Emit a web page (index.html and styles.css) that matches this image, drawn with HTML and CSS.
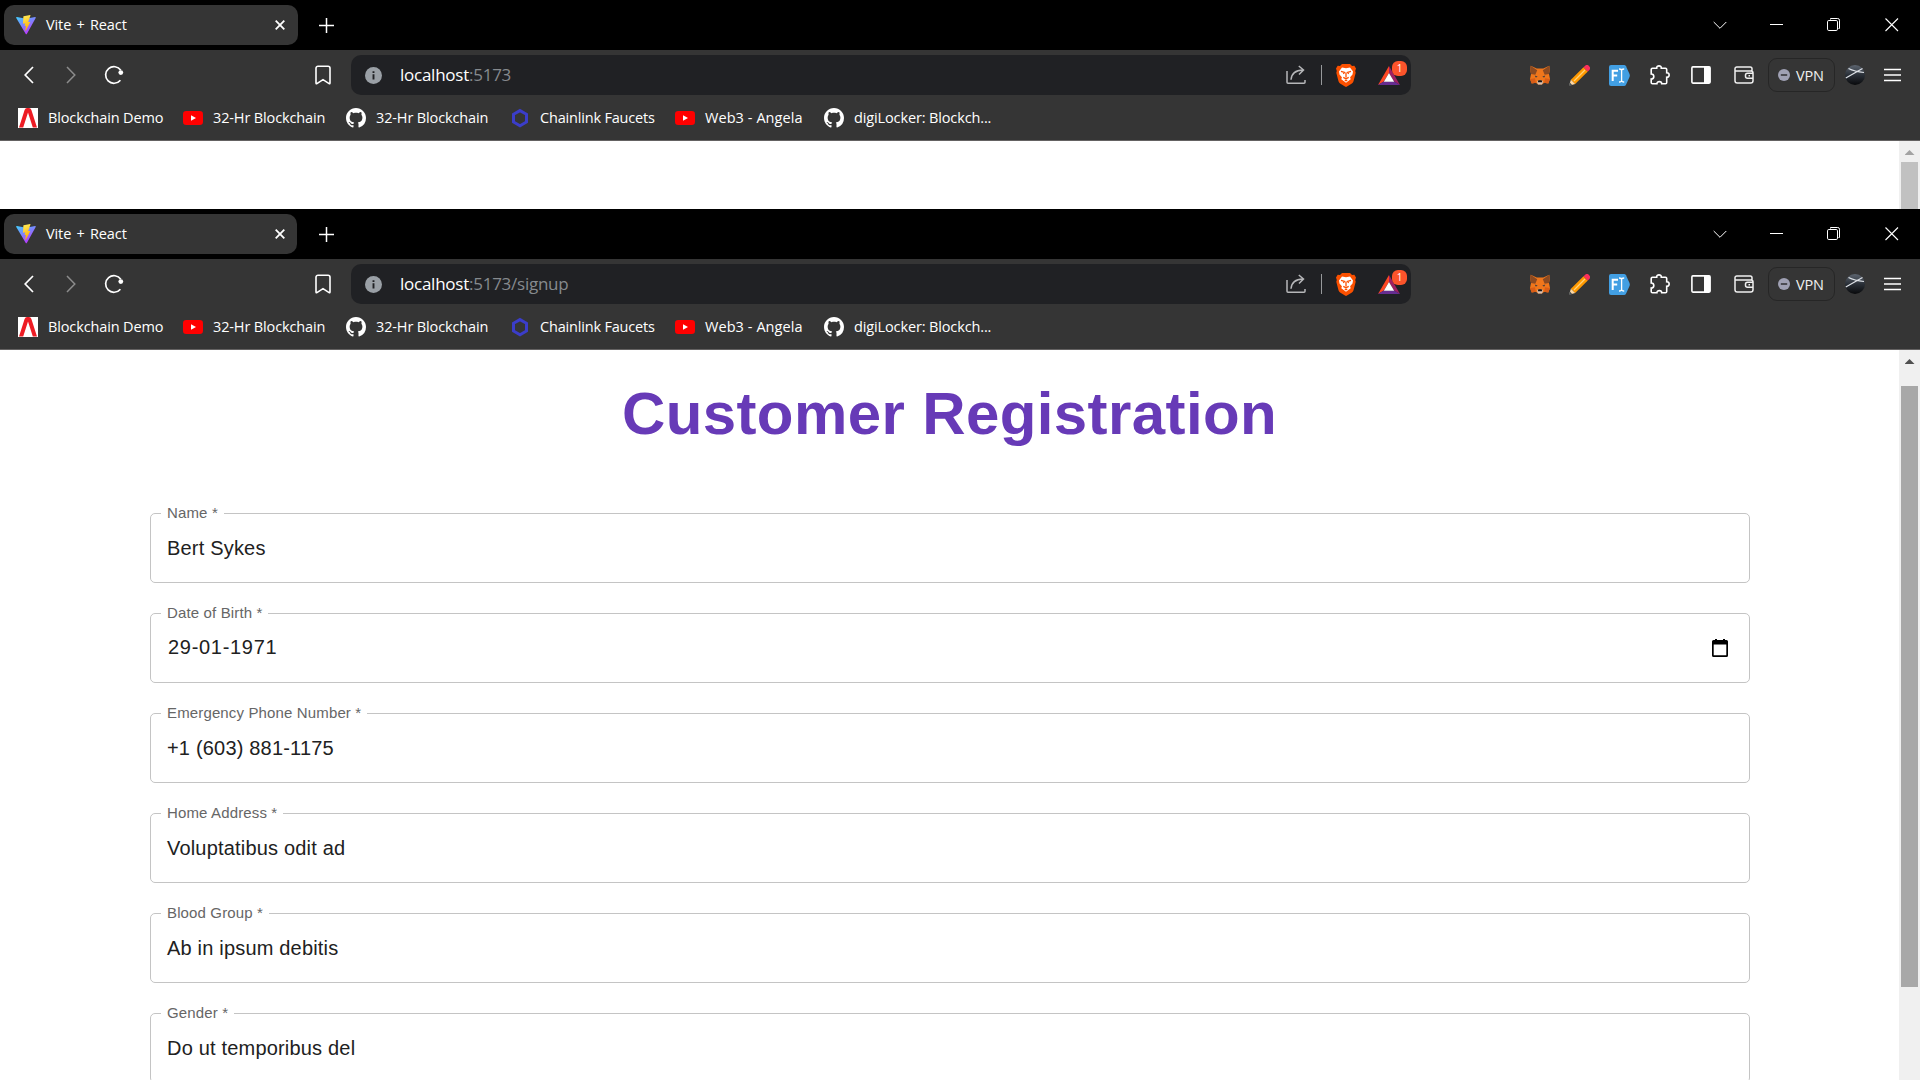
FILE: index.html
```html
<!DOCTYPE html>
<html lang="en">
<head>
<meta charset="utf-8">
<title>Vite + React</title>
<link rel="stylesheet" href="styles.css">
</head>
<body>
<svg class="sprite" aria-hidden="true">
  <defs>
    <linearGradient id="vg" x1="0" y1="0" x2="0.6" y2="1"><stop offset="0" stop-color="#41d1ff"/><stop offset="1" stop-color="#bd34fe"/></linearGradient>
    <linearGradient id="bolt" x1="0.4" y1="0" x2="0.6" y2="1"><stop offset="0" stop-color="#ffea55"/><stop offset="1" stop-color="#ffa800"/></linearGradient>
    <linearGradient id="ball" x1="0" y1="0" x2="0" y2="1"><stop offset="0" stop-color="#5d6570"/><stop offset="0.5" stop-color="#2a3038"/><stop offset="1" stop-color="#08090b"/></linearGradient>
  </defs>
  <symbol id="vite" viewBox="0 0 32 32"><path d="M31.5 4.8 17.3 30.3a1 1 0 0 1-1.7 0L.4 4.8a1 1 0 0 1 1-1.5l14.5 2.6 14.6-2.6a1 1 0 0 1 1 1.5Z" fill="url(#vg)"/><path d="M22.7.1 12.2 2.1a.4.4 0 0 0-.4.4l-.6 11a.4.4 0 0 0 .5.4l3-.7-.9 4.4 2.2-.2-1.3 7.5 1 .1L22.9 11l-3.4.3L23.200.6Z" fill="url(#bolt)"/></symbol>
  <symbol id="tabx" viewBox="0 0 10 10"><path d="M.7.7 9.300 9.300M9.300.7.7 9.300" stroke="#fff" stroke-width="1.8"/></symbol>
  <symbol id="plus" viewBox="0 0 15 15"><path d="M7.500 0v15M0 7.500h15" stroke="#fff" stroke-width="1.500"/></symbol>
  <symbol id="down" viewBox="0 0 14 14"><path d="m.7 4 6.300 6.300L13.300 4" fill="none" stroke="#fff" stroke-width="1"/></symbol>
  <symbol id="min" viewBox="0 0 14 14"><path d="M0 6.500h13" stroke="#fff"/></symbol>
  <symbol id="max" viewBox="0 0 14 14"><path d="M3.500 1.500V.5h7.200a1.800 1.800 0 0 1 1.800 1.800v8.200h-1" fill="none" stroke="#fff"/><rect x=".5" y="2.500" width="10" height="10" rx="1.300" fill="none" stroke="#fff"/></symbol>
  <symbol id="wx" viewBox="0 0 14 14"><path d="m.5.5 12.500 12.500M13 .5.5 13" stroke="#fff" stroke-width="1.100"/></symbol>
  <symbol id="back" viewBox="0 0 10 18"><path d="M9 1 1.200 9 9 17" fill="none" stroke="#fff" stroke-width="1.700"/></symbol>
  <symbol id="fwd" viewBox="0 0 10 18"><path d="m1 1 7.800 8L1 17" fill="none" stroke="#8c8c8c" stroke-width="1.500"/></symbol>
  <symbol id="reload" viewBox="0 0 20 20"><path d="M16.400 15.200a8.300 8.300 0 1 1 .4-9.900" fill="none" stroke="#fff" stroke-width="1.700"/><circle cx="16.800" cy="7.600" r="2.400" fill="#fff"/></symbol>
  <symbol id="mark" viewBox="0 0 16 20"><path d="M1 3.200A2 2 0 0 1 3 1.200h10a2 2 0 0 1 2 2v14.900q0 1-.9.5L8 14.600 1.900 18.600q-.9.500-.9-.5Z" fill="none" stroke="#fff" stroke-width="1.600"/></symbol>
  <symbol id="info" viewBox="0 0 17 17"><circle cx="8.500" cy="8.500" r="8.500" fill="#9aa0a6"/><path d="M8.500 7.200v5.300M8.500 4.200v1.900" stroke="#202124" stroke-width="1.900"/></symbol>
  <symbol id="share" viewBox="0 0 20 20"><path d="M1 6v11.200a1 1 0 0 0 1 1h16a1 1 0 0 0 1-1V15M5 14.800C5.500 8.500 9 5.300 17 5.100M12.800 1 17.500 5l-4.500 4.500" fill="none" stroke="#b6b7b9" stroke-width="1.500"/></symbol>
  <symbol id="brave" viewBox="0 0 20 23"><path d="M6 0h8l2 2 2.300-.2L20 4.600l-.8 2.300.5 1.800-2.200 8.600a4 4 0 0 1-1.600 2.200L11 22.600a2 2 0 0 1-2 0l-4.900-3.100a4 4 0 0 1-1.600-2.200L.3 8.700l.5-1.800L0 4.600l1.700-2.800L4 2Z" fill="#fb5000"/><path d="m6 3.500 4 .8 4-.8 3 3.900-.5 3-2.400 2.800.6 2.100L10 18.700l-4.700-3.400.6-2.100-2.400-2.800-.5-3Z" fill="#fff"/><path d="m5 7.400 3.400 1-1 1.600M15 7.400l-3.400 1 1 1.600M10 8.400v5M7.300 13.400 10 14.800l2.700-1.400M8.700 16.500h2.600" fill="none" stroke="#fb5000" stroke-width="1.300"/></symbol>
  <symbol id="bat" viewBox="0 0 22 19"><path d="M11 0v7L5.800 15.500 0 19Z" fill="#ff4724"/><path d="M11 0v7l5.200 8.500L22 19Z" fill="#9e1f63"/><path d="m0 19 5.800-3.500h10.400L22 19Z" fill="#662d91"/><path d="m11 7 5.200 8.700H5.800Z" fill="#fff"/></symbol>
  <symbol id="fox" viewBox="0 0 20 20"><path d="m.7.800 6 2.700h6.600l6-2.700.5 4.200-.8 4 1 5-1.700 4.500-4.200-.8L12 19.500H8l-2.100-1.800-4.200.8L0 14l1-5-.8-4Z" fill="#f0761b"/><path d="m.7.800 6.500 4.400-1.900 4.500L1 9l-.8-4ZM19.300.8l-6.500 4.400 1.900 4.500L19 9l.8-4Z" fill="#8b4a22"/><path d="m0 14 5-.8.900 4.500-4.200.8ZM20 14l-5-.8-.9 4.500 4.200.8Z" fill="#d95d17"/><path d="m4.800 10.600 2.900 1.200-1.900.6ZM15.200 10.600l-2.900 1.200 1.900.6Z" fill="#233447"/><path d="m7 16.700 1-1.200h4l1 1.200-1 2.800H8Z" fill="#d7c1b3"/><path d="M8.300 15.200h3.400l.5 2H7.800Z" fill="#161616"/></symbol>
  <symbol id="pencil" viewBox="0 0 21 21"><path d="m14.500 2.200 4.300 4.300L6.200 19 1.900 14.700Z" fill="#ff9900"/><path d="m1.900 14.700 4.300 4.300-5.400 1.600-.6-.7Z" fill="#ffd9a5"/><path d="m.9 17.600 2.300 2.300-2.400 1-.7-.9Z" fill="#46515b"/><path d="m14.500 2.200 1.700-1.500a2.500 2.500 0 0 1 3.500 0l.7.7a2.500 2.500 0 0 1 0 3.500l-1.600 1.600Z" fill="#f9305b"/><path d="M5 16 16 5" stroke="#ffd27a" stroke-width="1.200"/></symbol>
  <symbol id="fi" viewBox="0 0 21 21"><path d="M2 0h13q1.400 0 2 1.200l3.500 7.800q.6 1.500 0 3L17 19.800q-.6 1.200-2 1.200H2q-2 0-2-2V2q0-2 2-2Z" fill="#429fe3"/><path d="M3.700 16V5.700H9M3.700 10.600h4.500" fill="none" stroke="#fff" stroke-width="2"/><path d="M10 4q2.600 0 2.600 1.500v10q0 1.500-2.600 1.500M15.200 4q-2.600 0-2.600 1.500v10q0 1.500 2.600 1.500" fill="none" stroke="#fff" stroke-width="1.300"/></symbol>
  <symbol id="puzzle" viewBox="0 0 20 20"><path d="M2.500 3.300h4.200C6.400 0 11.600 0 11.300 3.300h4.200q1.200 0 1.200 1.200v3.300c3.300-.3 3.300 4.700 0 4.400v5.300q0 1.300-1.200 1.300h-3.800c0-2.900-4.800-2.900-4.800 0H2.500q-1.300 0-1.300-1.300v-3.400c3.500 0 3.500-5.100 0-5.100V4.500q0-1.200 1.300-1.200Z" fill="none" stroke="#fff" stroke-width="1.600"/></symbol>
  <symbol id="panel" viewBox="0 0 20 18"><rect x=".9" y=".9" width="18.200" height="16.200" rx="1" fill="none" stroke="#fff" stroke-width="1.600"/><path d="M13 1h6v16h-6Z" fill="#fff"/></symbol>
  <symbol id="wallet" viewBox="0 0 20 18"><path d="M18 5.500V2.800A1.800 1.800 0 0 0 16.200 1H2.800A1.800 1.800 0 0 0 1 2.800v11.900A2.300 2.300 0 0 0 3.300 17h13.400a2.300 2.300 0 0 0 2.300-2.300V7a2 2 0 0 0-2-2H1.500M19 7.200h-5.500a2 2 0 0 0-2 2v1a2 2 0 0 0 2 2H19M14.500 9.700h1.500" fill="none" stroke="#f0f0f0" stroke-width="1.500"/></symbol>
  <symbol id="minus" viewBox="0 0 12 12"><circle cx="6" cy="6" r="6" fill="#a0a1b4"/><path d="M2.800 6h6.400" stroke="#303033" stroke-width="1.500"/></symbol>
  <symbol id="avatar" viewBox="0 0 20 20"><circle cx="10" cy="10" r="10" fill="url(#ball)"/><path d="M.8 13 17.500 3.500M3.500 3.500q6 3 15.500 4" fill="none" stroke="#dfe3e8" stroke-width="1.200"/></symbol>
  <symbol id="menu" viewBox="0 0 17 14"><path d="M0 1.500h17M0 7h17M0 12.500h17" stroke="#fff" stroke-width="1.500"/></symbol>
  <symbol id="demo" viewBox="0 0 20 20"><path d="M0 0h20v20H0Z" fill="#fff"/><path d="M1 19.500 6.600 2Q7.300 0 9 0h2q1.700 0 2.400 2L19 19.500h-4.200L10 4.500 5.200 19.500Z" fill="#ed1c24"/></symbol>
  <symbol id="yt" viewBox="0 0 20 20"><rect y="3" width="20" height="14" rx="3.300" fill="#f00"/><path d="m8 7.200 5 2.800-5 2.800Z" fill="#fff"/></symbol>
  <symbol id="gh" viewBox="0 0 16 16"><path fill="#fff" d="M8 0C3.580 0 0 3.580 0 8c0 3.540 2.290 6.530 5.470 7.590.4.070.55-.17.55-.38 0-.19-.01-.82-.01-1.490-2.010.37-2.530-.49-2.690-.94-.09-.23-.48-.94-.82-1.130-.28-.15-.68-.52-.01-.53.63-.01 1.080.58 1.230.82.72 1.210 1.870.87 2.330.66.07-.52.28-.87.51-1.070-1.780-.2-3.640-.89-3.640-3.950 0-.87.31-1.590.82-2.150-.08-.2-.36-1.020.08-2.120 0 0 .67-.21 2.200.82.640-.18 1.320-.27 2-.27s1.360.09 2 .27c1.530-1.040 2.200-.82 2.200-.82.44 1.100.16 1.920.08 2.120.51.56.82 1.270.82 2.150 0 3.070-1.870 3.750-3.650 3.950.29.25.54.73.54 1.480 0 1.070-.01 1.930-.01 2.200 0 .21.15.46.55.38A8.010 8.010 0 0 0 16 8c0-4.420-3.580-8-8-8Z"/></symbol>
  <symbol id="link" viewBox="0 0 20 20"><path d="m9 2.600 6.500 3.700v7.700L9 17.700 2.500 14V6.300Z" fill="none" stroke="#3b3dc9" stroke-width="3"/></symbol>
</svg>

<section class="window window-back">
  <header class="tabs">
    <div class="tab"><svg class="i20"><use href="#vite"/></svg><span class="tab-title">Vite + React</span><svg class="i10"><use href="#tabx"/></svg></div>
    <svg class="i15 new-tab"><use href="#plus"/></svg>
    <div class="controls"><svg class="i14"><use href="#down"/></svg><svg class="i14"><use href="#min"/></svg><svg class="i14"><use href="#max"/></svg><svg class="i14"><use href="#wx"/></svg></div>
  </header>
  <div class="toolbar">
    <nav class="nav"><svg class="arrow"><use href="#back"/></svg><svg class="arrow"><use href="#fwd"/></svg><svg class="i20"><use href="#reload"/></svg><svg class="mark"><use href="#mark"/></svg></nav>
    <div class="address"><svg class="i17"><use href="#info"/></svg><span class="url">localhost<span class="path">:5173</span></span><svg class="i20"><use href="#share"/></svg><i class="divider"></i><svg class="brave"><use href="#brave"/></svg><div class="rewards"><svg class="bat"><use href="#bat"/></svg><b class="badge">1</b></div></div>
    <div class="extensions"><svg class="i20"><use href="#fox"/></svg><svg class="i21"><use href="#pencil"/></svg><svg class="i21"><use href="#fi"/></svg><svg class="i20"><use href="#puzzle"/></svg><svg class="i20w"><use href="#panel"/></svg><svg class="i20w"><use href="#wallet"/></svg><div class="vpn"><svg class="i12"><use href="#minus"/></svg>VPN</div><svg class="i20"><use href="#avatar"/></svg><svg class="menu"><use href="#menu"/></svg></div>
  </div>
  <div class="bookmarks">
    <a><svg class="i20"><use href="#demo"/></svg>Blockchain Demo</a><a><svg class="i20"><use href="#yt"/></svg>32-Hr Blockchain</a><a><svg class="i20"><use href="#gh"/></svg>32-Hr Blockchain</a><a class="snug"><svg class="i20"><use href="#link"/></svg>Chainlink Faucets</a><a class="loose"><svg class="i20"><use href="#yt"/></svg>Web3 - Angela</a><a><svg class="i20"><use href="#gh"/></svg>digiLocker: Blockch...</a>
  </div>
  <div class="viewport">
    <main class="page"></main>
    <div class="scrollbar"><i class="up"></i><i class="thumb"></i></div>
  </div>
</section>

<section class="window window-front">
  <header class="tabs">
    <div class="tab"><svg class="i20"><use href="#vite"/></svg><span class="tab-title">Vite + React</span><svg class="i10"><use href="#tabx"/></svg></div>
    <svg class="i15 new-tab"><use href="#plus"/></svg>
    <div class="controls"><svg class="i14"><use href="#down"/></svg><svg class="i14"><use href="#min"/></svg><svg class="i14"><use href="#max"/></svg><svg class="i14"><use href="#wx"/></svg></div>
  </header>
  <div class="toolbar">
    <nav class="nav"><svg class="arrow"><use href="#back"/></svg><svg class="arrow"><use href="#fwd"/></svg><svg class="i20"><use href="#reload"/></svg><svg class="mark"><use href="#mark"/></svg></nav>
    <div class="address"><svg class="i17"><use href="#info"/></svg><span class="url">localhost<span class="path">:5173/signup</span></span><svg class="i20"><use href="#share"/></svg><i class="divider"></i><svg class="brave"><use href="#brave"/></svg><div class="rewards"><svg class="bat"><use href="#bat"/></svg><b class="badge">1</b></div></div>
    <div class="extensions"><svg class="i20"><use href="#fox"/></svg><svg class="i21"><use href="#pencil"/></svg><svg class="i21"><use href="#fi"/></svg><svg class="i20"><use href="#puzzle"/></svg><svg class="i20w"><use href="#panel"/></svg><svg class="i20w"><use href="#wallet"/></svg><div class="vpn"><svg class="i12"><use href="#minus"/></svg>VPN</div><svg class="i20"><use href="#avatar"/></svg><svg class="menu"><use href="#menu"/></svg></div>
  </div>
  <div class="bookmarks">
    <a><svg class="i20"><use href="#demo"/></svg>Blockchain Demo</a><a><svg class="i20"><use href="#yt"/></svg>32-Hr Blockchain</a><a><svg class="i20"><use href="#gh"/></svg>32-Hr Blockchain</a><a class="snug"><svg class="i20"><use href="#link"/></svg>Chainlink Faucets</a><a class="loose"><svg class="i20"><use href="#yt"/></svg>Web3 - Angela</a><a><svg class="i20"><use href="#gh"/></svg>digiLocker: Blockch...</a>
  </div>
  <div class="viewport">
    <main class="page">
      <h1 class="title">Customer Registration</h1>
      <form class="form">
        <fieldset class="field"><legend>Name *</legend><div class="value">Bert Sykes</div></fieldset>
        <fieldset class="field"><legend>Date of Birth *</legend><div class="value date"><span class="digits">29-01-1971</span><svg class="calendar" viewBox="0 0 16 18"><path d="M3 0h2v1h6V0h2v1h1.500A1.500 1.500 0 0 1 16 2.500v14a1.500 1.500 0 0 1-1.500 1.500h-13A1.500 1.500 0 0 1 0 16.500v-14A1.500 1.500 0 0 1 1.500 1H3ZM1.700 5.600v10.700h12.600V5.600Z"/></svg></div></fieldset>
        <fieldset class="field"><legend>Emergency Phone Number *</legend><div class="value">+1 (603) 881-1175</div></fieldset>
        <fieldset class="field"><legend>Home Address *</legend><div class="value">Voluptatibus odit ad</div></fieldset>
        <fieldset class="field"><legend>Blood Group *</legend><div class="value">Ab in ipsum debitis</div></fieldset>
        <fieldset class="field"><legend>Gender *</legend><div class="value">Do ut temporibus del</div></fieldset>
      </form>
    </main>
    <div class="scrollbar"><i class="up"></i><i class="thumb"></i></div>
  </div>
</section>
</body>
</html>
```
FILE: styles.css
```css
* { box-sizing: border-box; }
body { margin: 0; height: 1080px; overflow: hidden; background: #fff; font-family: "Open Sans", "Noto Sans", sans-serif; }
svg { display: block; flex: none; }
.sprite { position: absolute; width: 0; height: 0; }

.window { display: flex; flex-direction: column; overflow: hidden; }
.window-back { height: 209px; }
.window-front { height: 871px; }

.i10 { width: 10px; height: 10px; }
.i12 { width: 12px; height: 12px; }
.i14 { width: 14px; height: 14px; }
.i15 { width: 15px; height: 15px; }
.i17 { width: 17px; height: 17px; }
.i20 { width: 20px; height: 20px; }
.i20w { width: 20px; height: 18px; }
.i21 { width: 21px; height: 21px; }
.arrow { width: 10px; height: 18px; }
.mark { width: 16px; height: 20px; }
.brave { width: 20px; height: 23px; }
.bat { width: 22px; height: 19px; }
.menu { width: 17px; height: 14px; }

.tabs { flex: none; height: 50px; background: #000; display: flex; align-items: center; padding-left: 4px; }
.tab { width: 294px; height: 40px; border-radius: 10px; background: #353535; color: #fff; display: flex; align-items: center; padding: 0 13px 0 12px; }
.window-front .tab { width: 293px; padding-right: 12px; }
.tab-title { flex: 1; margin-left: 10px; padding-bottom: 2px; font-size: 14.500px; letter-spacing: -0.100px; word-spacing: 1.600px; }
.new-tab { margin-left: 21px; }
.window-front .new-tab { margin-left: 22px; }
.controls { margin-left: auto; padding: 0 22px 1px 0; display: grid; grid-template-columns: 57px 57px 58px 13px; }

.toolbar { flex: none; height: 50px; background: #353535; display: flex; align-items: center; }
.nav { width: 351px; padding-left: 24px; display: grid; grid-template-columns: 42px 38px 211px 16px; align-items: center; }
.address { width: 1060px; height: 40px; border-radius: 10px; background: #202124; display: flex; align-items: center; padding: 0 11px 0 14px; }
.url { flex: 1; margin-left: 18px; padding-bottom: 2px; color: #fff; font-size: 17px; letter-spacing: -0.250px; }
.path { color: #868a8e; }
.divider { width: 1px; height: 20px; background: #97999b; margin: 0 14px 0 15px; }
.rewards { position: relative; margin-left: 22px; }
.badge { position: absolute; left: 14px; top: -5px; width: 15px; height: 15px; border-radius: 6px; background: #fb542b; color: #fff; font-weight: 400; font-size: 10px; line-height: 15px; text-align: center; }
.extensions { margin-left: auto; padding-right: 19px; display: grid; grid-template-columns: 39px 40px 41px 41px 43px 34px 77px 39px 17px; align-items: center; }
.vpn { width: 67px; height: 34px; border: 1px solid #262626; border-radius: 9px; display: flex; align-items: center; gap: 6px; padding-left: 9px; color: #f0f0f0; font-size: 14.500px; letter-spacing: -0.200px; }

.bookmarks { flex: none; height: 41px; background: #353535; border-bottom: 1px solid #646262; display: grid; grid-template-columns: 165px 163px 165px 164px 149px 200px; align-items: start; padding: 7px 0 0 18px; color: #fff; font-size: 14.500px; line-height: 21px; white-space: nowrap; letter-spacing: -0.130px; }
.bookmarks a { display: flex; align-items: center; gap: 10px; }
.bookmarks .snug { gap: 9px; letter-spacing: -0.180px; }
.bookmarks .loose { letter-spacing: 0.070px; }

.viewport { flex: 1; min-height: 0; display: flex; background: #fff; overflow: hidden; }
.page { flex: 1; font-family: "Liberation Sans", Arial, sans-serif; }
.scrollbar { width: 21px; background: #f0f0f0; display: flex; flex-direction: column; align-items: center; }
.up { flex: none; margin-top: 9px; width: 10px; height: 5px; background: #a3a3a3; clip-path: polygon(50% 0, 100% 100%, 0 100%); }
.thumb { margin-top: 7px; width: 17px; height: 300px; background: #c1c1c1; flex: none; }
.window-front .up { background: #505050; }
.window-front .thumb { margin-top: 22px; height: 601px; background: #a8a8a8; }

.title { margin: 29px 0 0; text-align: center; color: #673ab7; font-size: 60px; line-height: 70px; font-weight: 700; letter-spacing: 0.400px; }
.form { padding: 56px 149px 0 150px; display: flex; flex-direction: column; gap: 22px; }
.field { flex: none; margin: 0; min-width: 0; height: 78px; padding: 0 16px; border: 1px solid #c4c4c4; border-radius: 5px; }
.field legend { margin-left: -6px; padding: 0 6px; font-size: 15px; line-height: 16px; letter-spacing: 0.140px; color: #666; }
.value { margin-top: 16px; font-size: 20px; line-height: 23px; letter-spacing: 0.188px; color: #212121; }
.date { display: flex; align-items: center; justify-content: space-between; margin-top: 15px; padding: 0 5px 0 1px; }
.digits { letter-spacing: 0.700px; }
.calendar { width: 16px; height: 18px; }
```
